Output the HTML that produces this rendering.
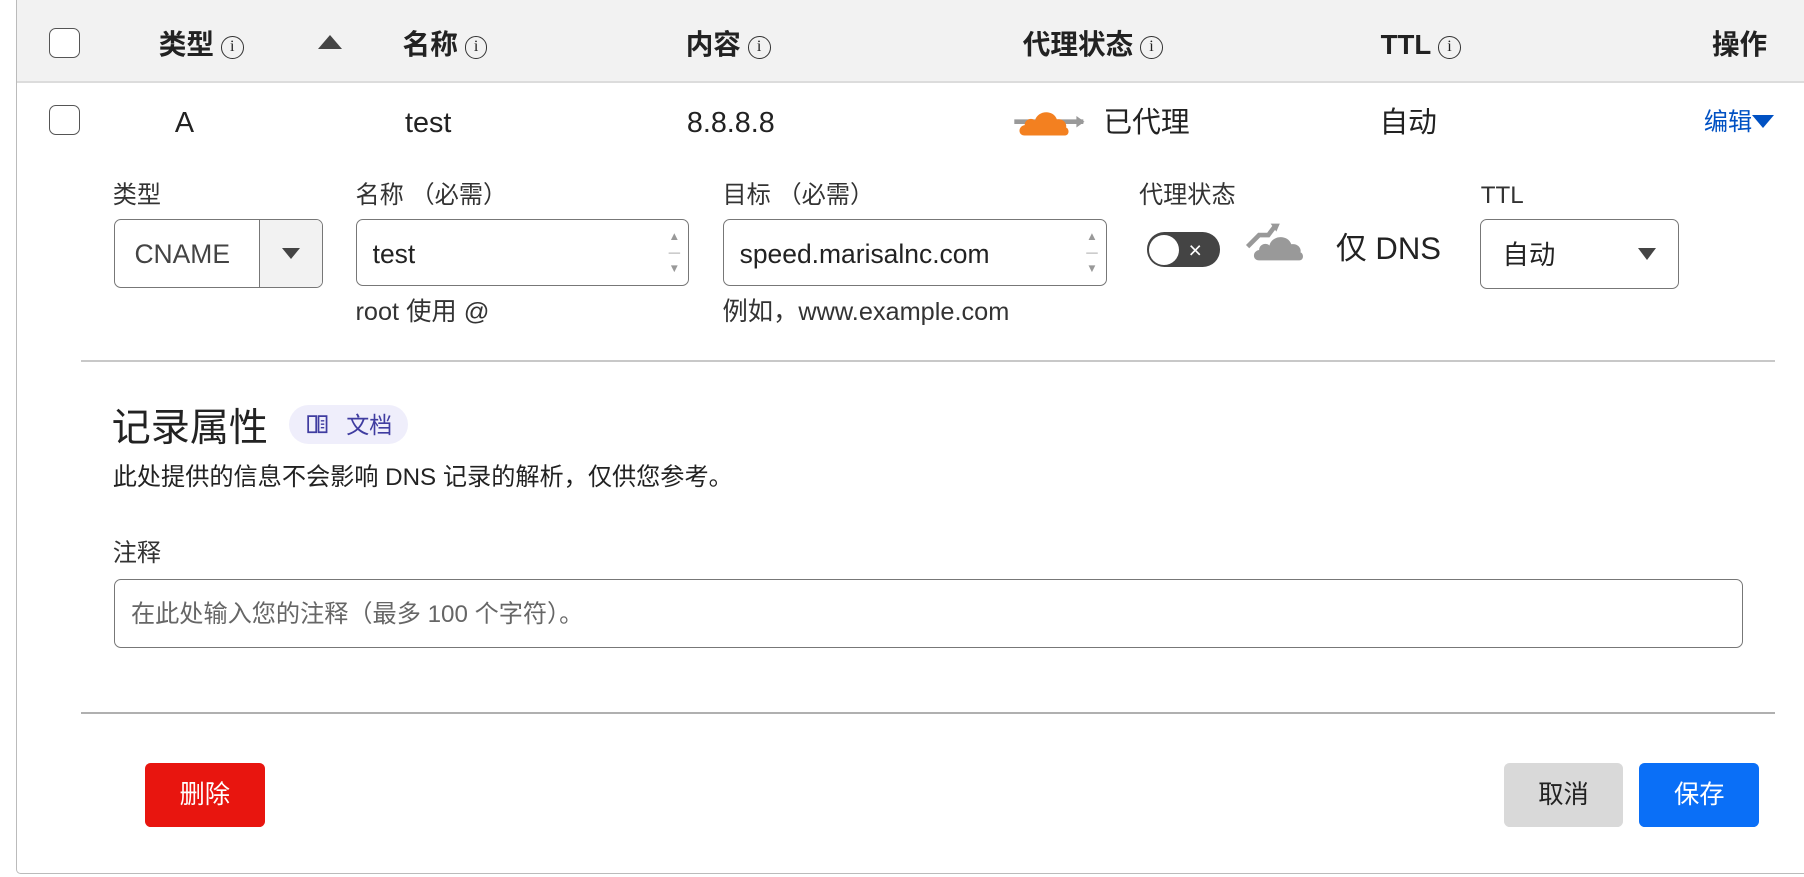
<!DOCTYPE html>
<html><head><meta charset="utf-8"><style>
html,body{margin:0;padding:0;background:#fff;overflow:hidden}
body{width:1804px;height:877px}
#w{zoom:1.1505;width:1568px;height:762px;position:relative;font-family:"Liberation Sans","Noto Sans CJK SC",sans-serif;color:#333}
.a{position:absolute;white-space:nowrap}
.frame{left:14px;top:-5px;width:1600px;height:765px;border:1px solid #bbb;border-radius:0 0 0 4px;box-sizing:border-box}
.hd{left:15px;top:0;width:1553px;height:70px;background:#f2f2f2;border-bottom:2px solid #dcdcdc}
.cb{width:25px;height:25px;border:1.5px solid #555;border-radius:6px;background:#fff}
.h{font-size:24px;font-weight:bold;color:#222;top:22px;line-height:34px}
.i{display:inline-block;width:18px;height:18px;border:1.5px solid #333;border-radius:50%;font-size:14px;line-height:18px;text-align:center;font-weight:normal;margin-left:6px;vertical-align:3px;font-family:"Liberation Serif",serif}
.r{font-size:25px;color:#222;top:90px;line-height:34px}
.l{font-size:21px;color:#333;top:156px;line-height:30px}
.box{border:1.5px solid #777;border-radius:6px;background:#fff;box-sizing:border-box}
.t{font-size:23px;color:#222;line-height:30px}
.spin{position:absolute;right:6px;top:8px;width:12px;font-size:10px;color:#999;line-height:14px;text-align:center}
.btn{border-radius:5px;font-size:22px;text-align:center;line-height:56px;height:56px;width:104px}
</style></head><body><div id="w">
<div class="a frame"></div>
<div class="a hd"></div>
<div class="a cb" style="left:43px;top:24px"></div>
<div class="a h" style="left:138px">类型<span class="i">i</span></div>
<div class="a" style="left:276px;top:30px;width:0;height:0;border-left:11px solid transparent;border-right:11px solid transparent;border-bottom:13px solid #444"></div>
<div class="a h" style="left:350px">名称<span class="i">i</span></div>
<div class="a h" style="left:596px">内容<span class="i">i</span></div>
<div class="a h" style="left:889px">代理状态<span class="i">i</span></div>
<div class="a h" style="left:1200px">TTL<span class="i">i</span></div>
<div class="a h" style="left:1488px">操作</div>

<div class="a cb" style="left:43px;top:91px"></div>
<div class="a r" style="left:152px">A</div>
<div class="a r" style="left:352px">test</div>
<div class="a r" style="left:597px">8.8.8.8</div>
<svg class="a" style="left:880px;top:88px" width="66" height="34" viewBox="0 0 66 34"><path d="M2 18h60" stroke="#999" stroke-width="4"/><path d="M56 13l7 5-7 5z" fill="#999"/><path d="M11 30c-6 0-6-8 0-9 0-5 6-7 9-4 2-9 16-10 19-1 5-1 9 3 8 7 3 1 3 7-1 7z" fill="#f38020"/></svg>
<div class="a r" style="left:959px">已代理</div>
<div class="a r" style="left:1199px">自动</div>
<div class="a" style="left:1481px;top:92px;font-size:21px;line-height:30px;color:#0051c3">编辑<span style="display:inline-block;width:0;height:0;border-left:10px solid transparent;border-right:10px solid transparent;border-top:12px solid #0051c3;vertical-align:2px"></span></div>

<div class="a l" style="left:98px">类型</div>
<div class="a l" style="left:309px">名称 （必需）</div>
<div class="a l" style="left:628px">目标 （必需）</div>
<div class="a l" style="left:990px">代理状态</div>
<div class="a l" style="left:1287px">TTL</div>

<div class="a box" style="left:99px;top:190px;width:182px;height:60px;overflow:hidden">
<div class="a t" style="left:17px;top:15px;color:#444">CNAME</div>
<div class="a" style="left:125px;top:0;width:57px;height:60px;background:#f2f2f2;border-left:1.5px solid #777"></div>
<div class="a" style="left:145px;top:25px;border-left:8px solid transparent;border-right:8px solid transparent;border-top:10px solid #444"></div>
</div>
<div class="a box" style="left:309px;top:190px;width:290px;height:59px">
<div class="a t" style="left:14px;top:15px">test</div><div class="spin">▲<br>—<br>▼</div></div>
<div class="a box" style="left:628px;top:190px;width:334px;height:59px">
<div class="a t" style="left:14px;top:15px">speed.marisalnc.com</div><div class="spin">▲<br>—<br>▼</div></div>
<div class="a" style="left:997px;top:202px;width:63px;height:30px;border-radius:15px;background:#444"></div>
<div class="a" style="left:999px;top:204px;width:26px;height:26px;border-radius:13px;background:#fff"></div>
<div class="a" style="left:1033px;top:203px;color:#fff;font-size:20px;line-height:28px">×</div>
<svg class="a" style="left:1080px;top:190px" width="60" height="40" viewBox="0 0 60 40"><path d="M4 24l10-10h8l6-8" stroke="#999" stroke-width="4" fill="none"/><path d="M24 4l8 0-3 7z" fill="#999"/><path d="M14 36c-6 0-6-8 0-9 0-5 6-7 9-4 2-9 16-10 19-1 5-1 9 3 8 7 3 1 3 7-1 7z" fill="#999"/></svg>
<div class="a" style="left:1161px;top:199px;font-size:27px;line-height:34px;color:#222">仅 DNS</div>
<div class="a box" style="left:1286px;top:190px;width:173px;height:61px">
<div class="a t" style="left:19px;top:16px">自动</div>
<div class="a" style="left:137px;top:25px;border-left:8px solid transparent;border-right:8px solid transparent;border-top:11px solid #444"></div></div>

<div class="a" style="left:309px;top:256px;font-size:22px;line-height:30px;color:#333">root 使用 @</div>
<div class="a" style="left:628px;top:256px;font-size:22px;line-height:30px;color:#333">例如，www.example.com</div>

<div class="a" style="left:70px;top:313px;width:1473px;height:1.5px;background:#c8c8c8"></div>
<div class="a" style="left:97px;top:352px;font-size:34px;line-height:42px;color:#222">记录属性</div>
<div class="a" style="left:251px;top:352px;width:104px;height:34px;border-radius:17px;background:#efeefb"></div>
<svg class="a" style="left:267px;top:361px" width="18" height="16" viewBox="0 0 18 16"><path d="M1 1h7v14H1zM10 1h7v14h-7z" fill="none" stroke="#3f3ca0" stroke-width="1.5"/><path d="M12 5h3M12 8h3M12 11h3" stroke="#3f3ca0" stroke-width="1.2"/></svg>
<div class="a" style="left:301px;top:355px;font-size:20px;line-height:30px;color:#3f3ca0">文档</div>
<div class="a" style="left:98px;top:401px;font-size:21px;line-height:30px;color:#222">此处提供的信息不会影响 DNS 记录的解析，仅供您参考。</div>
<div class="a" style="left:98px;top:467px;font-size:21px;line-height:30px;color:#333">注释</div>
<div class="a box" style="left:99px;top:503px;width:1416px;height:60px">
<div class="a" style="left:14px;top:16px;font-size:21px;line-height:30px;color:#666">在此处输入您的注释（最多 100 个字符）。</div></div>
<div class="a" style="left:70px;top:619px;width:1473px;height:1.5px;background:#b0b0b0"></div>

<div class="a btn" style="left:126px;top:663px;background:#e8150f;color:#fff">删除</div>
<div class="a btn" style="left:1307px;top:663px;background:#d9d9d9;color:#222">取消</div>
<div class="a btn" style="left:1425px;top:663px;background:#0a6ff7;color:#fff">保存</div>
</div></body></html>
